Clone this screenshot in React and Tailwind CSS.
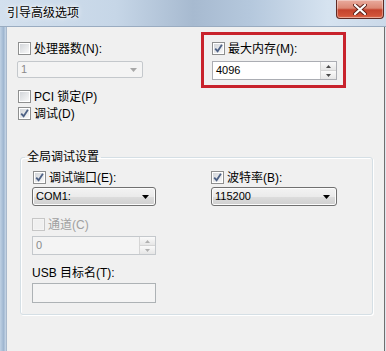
import React from 'react';

const FONT = { fontFamily: '"Liberation Sans", "Noto Sans CJK SC", sans-serif' };

function Check({ checked = false, disabled = false }) {
  return (
    <span
      className={`flex h-[13px] w-[13px] shrink-0 items-center justify-center border ${
        disabled ? 'border-[#c6c6c6] bg-[#f4f4f4]' : 'border-[#8e8f8f] bg-white'
      }`}
    >
      <span
        className={`flex h-[9px] w-[9px] items-center justify-center ${
          disabled ? 'bg-[#f0f0f0]' : 'bg-[linear-gradient(135deg,#d3d6da,#f8f8f8)]'
        }`}
      >
        {checked && (
          <svg width="9" height="9" viewBox="0 0 9 9" className="overflow-visible">
            <path d="M1.2 4.6 L3.6 7.2 L7.9 0.8" fill="none" stroke="#4d6185" strokeWidth="1.8" />
          </svg>
        )}
      </span>
    </span>
  );
}

function CheckRow({ checked, disabled, children, className = '' }) {
  return (
    <div className={`flex h-[13px] items-center gap-[3px] ${className}`}>
      <Check checked={checked} disabled={disabled} />
      <span className={`whitespace-nowrap text-[12px] leading-[14px] ${disabled ? 'text-[#a0a0a0]' : 'text-black'}`}>
        {children}
      </span>
    </div>
  );
}

function Arrow({ color = '#000' }) {
  return (
    <svg width="7" height="4" viewBox="0 0 7 4">
      <path d="M0 0 H7 L3.5 4 Z" fill={color} />
    </svg>
  );
}

function Select({ value, disabled = false, className = '' }) {
  if (disabled) {
    return (
      <div className={`flex items-center justify-between rounded-[2px] border border-[#c4c8cc] bg-[#f4f4f4] pl-[3px] pr-[5px] ${className}`}>
        <span className="text-[11px] leading-[13px] text-[#8a8a8a]">{value}</span>
        <Arrow color="#a8a8a8" />
      </div>
    );
  }
  return (
    <div
      className={`flex items-center justify-between rounded-[3px] border border-[#707070] bg-[linear-gradient(180deg,#f3f3f3_0%,#ebebeb_50%,#dddddd_51%,#cfcfcf_100%)] pl-[3px] pr-[6px] shadow-[inset_0_0_0_1px_#fcfcfc] ${className}`}
    >
      <span className="text-[11px] leading-[13px] text-black">{value}</span>
      <Arrow />
    </div>
  );
}

function Spin({ value, disabled = false, className = '' }) {
  const tri = disabled ? '#b0b0b0' : '#4a4a4a';
  return (
    <div
      className={`flex items-stretch border ${
        disabled ? 'border-[#c4c8cc] bg-[#f4f4f4]' : 'border-[#abadb3] bg-white'
      } ${className}`}
    >
      <span className={`flex flex-1 items-center pl-[3px] text-[11px] leading-[13px] ${disabled ? 'text-[#8a8a8a]' : 'text-black'}`}>
        {value}
      </span>
      <div className="flex w-[16px] flex-col border-l border-[#d5d5d5]">
        <div className="flex flex-1 items-center justify-center border-b border-[#d5d5d5] bg-[linear-gradient(180deg,#fafafa,#e6e6e6)]">
          <svg width="5" height="3" viewBox="0 0 5 3">
            <path d="M0 3 H5 L2.5 0 Z" fill={tri} />
          </svg>
        </div>
        <div className="flex flex-1 items-center justify-center bg-[linear-gradient(180deg,#fafafa,#e6e6e6)]">
          <svg width="5" height="3" viewBox="0 0 5 3">
            <path d="M0 0 H5 L2.5 3 Z" fill={tri} />
          </svg>
        </div>
      </div>
    </div>
  );
}

export default function App() {
  return (
    <div className="flex h-[351px] w-[386px] flex-col overflow-hidden bg-[#f0f0f0]" style={FONT}>
      {/* Title bar */}
      <div className="relative flex h-[27px] shrink-0 items-center border-b border-[#9aacc1] bg-[linear-gradient(90deg,#d3e0ee_0%,#c6d6e7_30%,#a7bad0_50%,#b5c8dd_65%,#d6e3f0_85%,#cbd9e9_100%)] pl-[7px]">
        <span className="text-[12px] leading-[14px] text-black [text-shadow:0_0_6px_#ffffff,0_0_3px_#ffffff]">
          引导高级选项
        </span>
        <div className="absolute right-[2px] top-0 flex h-[19px] w-[48px] items-center justify-center rounded-b-[4px] border border-t-0 border-[#5e2a24] bg-[linear-gradient(180deg,#e9ab9e_0%,#dc8874_45%,#c4432d_55%,#d2553a_90%,#e6876a_100%)] shadow-[inset_0_0_0_1px_rgba(255,255,255,0.35)]">
          <svg width="14" height="11" viewBox="0 0 14 11">
            <path d="M2 1 L12 10 M12 1 L2 10" stroke="#5a2018" strokeWidth="4" strokeLinecap="round" />
            <path d="M2 1 L12 10 M12 1 L2 10" stroke="#ffffff" strokeWidth="2.2" strokeLinecap="round" />
          </svg>
        </div>
      </div>

      <div className="flex flex-1">
        {/* left frame */}
        <div className="w-[7px] border-r border-[#a9b9cc] bg-[linear-gradient(90deg,#bfd1e4,#9fb6d0_60%,#c9d8e8)]" />

        {/* client area */}
        <div className="flex-1 bg-[#f0f0f0] pl-[10px] pt-[5px]">
          <div className="flex">
            <div className="w-[126px] pt-[10px]">
              <CheckRow className="pl-[1px]">处理器数(N):</CheckRow>
              <Select value="1" disabled className="mt-[6px] h-[17px] w-[126px]" />
              <CheckRow className="mt-[12px] pl-[1px]">PCI 锁定(P)</CheckRow>
              <CheckRow checked className="mt-[4px] pl-[1px]">调试(D)</CheckRow>
            </div>

            <div className="ml-[58px] h-[56px] w-[145px] border-[3px] border-[#c8222c] pl-[8px] pt-[7px]">
              <CheckRow checked>最大内存(M):</CheckRow>
              <Spin value="4096" className="mt-[6px] h-[19px] w-[125px]" />
            </div>
          </div>

          {/* group box */}
          <fieldset className="ml-[3px] mt-[30px] w-[353px] rounded-[3px] border border-[#d5dfe5] pl-[4px] pb-[11px] shadow-[inset_1px_1px_0_#ffffff,1px_1px_0_#ffffff]">
            <legend className="px-[2px] text-[12px] leading-[14px] text-black">全局调试设置</legend>
            <div className="pl-[7px] pt-[7px]">
              <div className="flex">
                <div className="w-[179px]">
                  <CheckRow checked className="pl-[1px]">调试端口(E):</CheckRow>
                  <Select value="COM1:" className="mt-[3px] h-[19px] w-[124px]" />
                </div>
                <div>
                  <CheckRow checked>波特率(B):</CheckRow>
                  <Select value="115200" className="mt-[3px] h-[19px] w-[126px]" />
                </div>
              </div>
              <CheckRow disabled className="mt-[12px]">通道(C)</CheckRow>
              <Spin value="0" disabled className="mt-[5px] h-[19px] w-[124px]" />
              <div className="mt-[11px] text-[12px] leading-[14px] text-black">USB 目标名(T):</div>
              <div className="mt-[3px] h-[20px] w-[124px] border border-[#adb2b5] bg-[#f4f4f4]" />
            </div>
          </fieldset>
        </div>

        {/* right frame */}
        <div className="w-[2px] border-l border-[#6f6f6f] bg-[#dfe6ee]" />
      </div>
    </div>
  );
}
